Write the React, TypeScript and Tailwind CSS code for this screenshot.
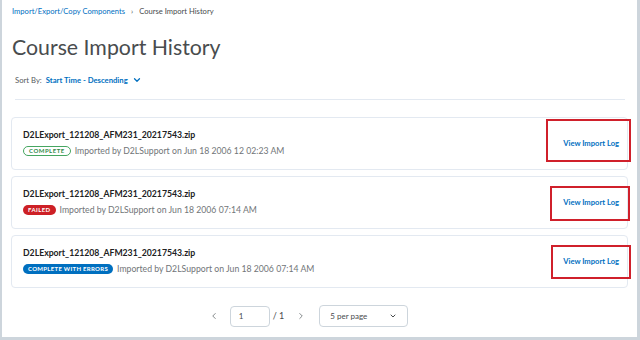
import { ChevronDown, ChevronLeft, ChevronRight } from 'lucide-react';

type Status = 'complete' | 'failed' | 'errors';

interface ImportRow {
  file: string;
  status: Status;
  when: string;
}

const rows: ImportRow[] = [
  { file: 'D2LExport_121208_AFM231_20217543.zip', status: 'complete', when: 'Jun 18 2006 12 02:23 AM' },
  { file: 'D2LExport_121208_AFM231_20217543.zip', status: 'failed', when: 'Jun 18 2006 07:14 AM' },
  { file: 'D2LExport_121208_AFM231_20217543.zip', status: 'errors', when: 'Jun 18 2006 07:14 AM' },
];

function StatusBadge({ status }: { status: Status }) {
  if (status === 'complete') {
    return (
      <span className="inline-flex h-[10px] items-center rounded-full border border-[#46a661] px-[5px] text-[6px] font-bold leading-none tracking-[0.5px] text-[#2f8a48]">
        COMPLETE
      </span>
    );
  }
  if (status === 'failed') {
    return (
      <span className="inline-flex h-[10px] items-center rounded-full bg-[#cd2026] px-[5px] text-[6px] font-bold leading-none tracking-[0.4px] text-white">
        FAILED
      </span>
    );
  }
  return (
    <span className="inline-flex h-[10px] items-center rounded-full bg-[#006fbf] px-[5px] text-[6px] font-bold leading-none tracking-[0.3px] text-white">
      COMPLETE WITH ERRORS
    </span>
  );
}

export default function App() {
  return (
    <div
      className="relative h-[340px] w-[640px] overflow-hidden border-b-[3px] border-l-2 border-r-[3px] border-[#cdd5dc] bg-white pl-[9px] pr-[9px] text-[#494c4e]"
      style={{ fontFamily: 'Lato, "Open Sans", sans-serif' }}
    >
      {/* Breadcrumb */}
      <div className="ml-[1px] mt-[5px] flex h-[12px] items-center text-[7.6px] leading-[12px]">
        <span className="text-[#006fbf]">Import/Export/Copy Components</span>
        <span className="mx-[6px] text-[#494c4e]">›</span>
        <span>Course Import History</span>
      </div>

      {/* Title */}
      <h1 className="ml-[1px] mt-[17px] text-[21.3px] leading-[26px] font-normal text-[#494c4e]">
        Course Import History
      </h1>

      {/* Sort */}
      <div className="ml-[4px] mt-[14px] flex h-[12px] items-center text-[7.7px] leading-[12px]">
        <span className="text-[#565a5c]">Sort By:</span>
        <span className="ml-[4px] font-bold text-[#006fbf]">Start Time - Descending</span>
        <ChevronDown className="ml-[4px] h-[10px] w-[10px] text-[#006fbf]" strokeWidth={3} />
      </div>

      <div className="ml-[4px] mr-[3px] mt-[13px] h-px bg-[#e3e9f1]" />

      {/* Import list */}
      <div className="mt-[17px] flex flex-col gap-[6px]">
        {rows.map((row, i) => (
          <div
            key={i}
            className="flex h-[53px] items-center justify-between rounded-[4px] border border-[#e3e9f1] pl-[11px] pr-[8px]"
          >
            <div className="flex flex-col self-start pt-[11px]">
              <div className="h-[12px] text-[8.7px] font-bold leading-[12px] text-[#202122]">{row.file}</div>
              <div className="mt-[4px] flex h-[12px] items-center gap-[4px]">
                <StatusBadge status={row.status} />
                <span className="text-[8.7px] leading-[12px] text-[#717578]">
                  Imported by D2LSupport on {row.when}
                </span>
              </div>
            </div>
            <a className="text-[7.6px] font-bold text-[#006fbf]">View Import Log</a>
          </div>
        ))}
      </div>

      {/* Pagination */}
      <div className="mt-[17px] flex items-center justify-center pr-[22px] text-[9px]">
        <ChevronLeft className="h-[10px] w-[10px] text-[#6e7376]" strokeWidth={2} />
        <div className="ml-[11px] flex h-[21px] w-[40px] items-center rounded-[4px] border border-[#cdd5dc] pl-[8px] text-[8px]">
          1
        </div>
        <span className="ml-[3px] text-[#494c4e]">/ 1</span>
        <ChevronRight className="ml-[12px] h-[10px] w-[10px] text-[#6e7376]" strokeWidth={2} />
        <div className="ml-[13px] flex h-[22px] w-[89px] items-center justify-between rounded-[4px] border border-[#cdd5dc] pl-[10px] pr-[10px] text-[8px]">
          <span>5 per page</span>
          <ChevronDown className="h-[8px] w-[8px] text-[#494c4e]" strokeWidth={3} />
        </div>
      </div>

      {/* Annotation boxes */}
      <div className="absolute left-[544px] top-[119px] h-[43px] w-[85px] border-2 border-[#d0202b]" />
      <div className="absolute left-[548px] top-[186px] h-[35px] w-[80px] border-2 border-[#d0202b]" />
      <div className="absolute left-[549px] top-[245px] h-[34px] w-[80px] border-2 border-[#d0202b]" />
    </div>
  );
}
